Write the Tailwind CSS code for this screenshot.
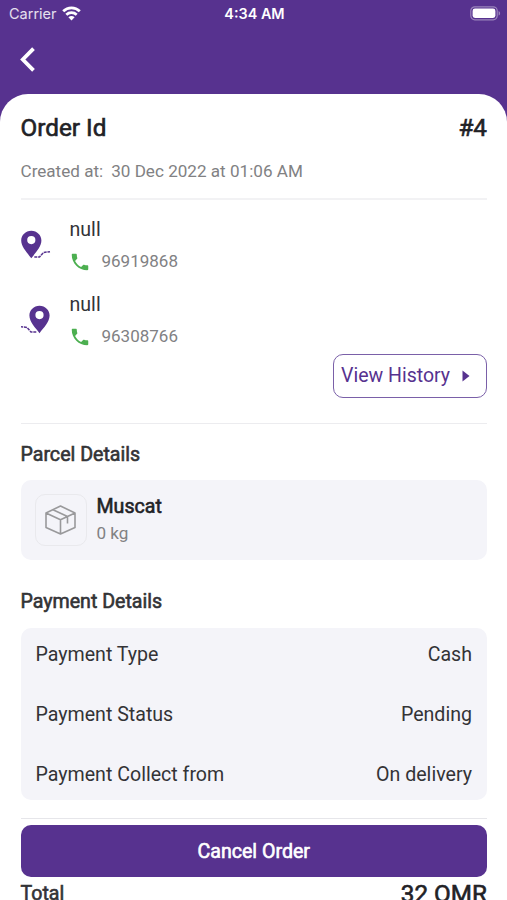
<!DOCTYPE html>
<html lang="en">
<head>
<meta charset="utf-8">
<title>Order details</title>
<script src="https://cdn.jsdelivr.net/npm/@tailwindcss/browser@4"></script>
</head>
<body class="bg-[#57328f]">
<div class="h-[900px] w-[507px] overflow-hidden bg-[#57328f] font-['Roboto',sans-serif] text-[#333336] whitespace-nowrap">
  <header class="h-[94px] text-white">
    <div class="grid h-[28px] grid-cols-3 items-center pl-[9px] pr-[6px] font-['Inter',sans-serif]">
      <div class="flex items-center gap-[6px] text-[14.5px] text-white/85"><span>Carrier</span>
        <svg class="-mt-[2px] -ml-px h-[15px] w-[19px]" viewBox="0 0 19 15" fill="none" stroke="#fff" stroke-width="2.7"><path d="M1.2 5.3C5.8.6 13.2.6 17.8 5.3M4.3 8.7c2.900-2.800 7.500-2.800 10.400 0"/><path d="M9.500 14.400 6.400 11.300c1.700-1.600 4.500-1.600 6.200 0z" fill="#fff" stroke="none"/></svg>
      </div>
      <div class="-ml-px text-center text-[14.4px] font-semibold">4:34 AM</div>
      <svg class="-mt-[2px] h-[15px] w-[31px] justify-self-end" viewBox="0 0 31 15" fill="none"><rect x=".8" y=".8" width="26.4" height="13" rx="4" stroke="#fff" stroke-opacity=".4" stroke-width="1.2"/><rect x="2.6" y="2.6" width="22.8" height="9.4" rx="2.4" fill="#fff"/><path d="M28.6 5v4.6c2-.8 2-3.8 0-4.6z" fill="#fff" fill-opacity=".4"/></svg>
    </div>
    <svg class="ml-[20px] mt-[19px] h-[25px] w-[16px]" viewBox="0 0 16 25" fill="none" stroke="#fff" stroke-width="3.8"><path d="M13.5 1.600 2.800 12.500l10.700 10.900"/></svg>
  </header>

  <main class="h-[806px] rounded-t-[28px] bg-white pl-[20.5px] pr-[20px]">
    <div class="flex h-[64px] items-start justify-between pt-[19px] text-[24.3px] leading-[30px] text-[#222226] [-webkit-text-stroke:0.6px_currentColor]"><h1>Order Id</h1><span>#4</span></div>
    <div class="flex h-[41.5px] items-start gap-[8px] border-b-2 border-[#f2f2f4] pt-px text-[17.1px] leading-[24px] text-[#818183]"><span>Created at:</span><span>30 Dec 2022 at 01:06 AM</span></div>

    <section class="h-[223.5px] pt-[14.5px]">
      <div class="flex h-[74.5px]">
        <svg class="mt-[16px] h-[30px] w-[30px]" viewBox="0 0 30 30"><path fill="#57328f" fill-rule="evenodd" d="M10.300.8C4.600.8.2 5.200.2 10.600c0 6.200 6 12.400 10.100 17.600 4.100-5.200 10.100-11.400 10.100-17.600C20.400 5.200 16 .8 10.300.8zm0 5.200a4.100 4.100 0 1 1 0 8.200 4.100 4.100 0 0 1 0-8.200z"/><path d="M13.300 27h5.200l4-4.500 6.500-.8" fill="none" stroke="#57328f" stroke-width="1.5" stroke-dasharray="3 .8"/></svg>
        <div class="ml-[19px]">
          <div class="pt-px text-[19.6px] leading-[30px]">null</div>
          <div class="flex h-[34px] items-center gap-[10.5px] text-[17px] text-[#818183]"><svg class="-ml-[0.5px] h-[22px] w-[22px]" viewBox="0 0 24 24" fill="#4caf50"><path d="M6.62 10.79c1.44 2.83 3.76 5.14 6.59 6.59l2.2-2.2c.27-.27.67-.36 1.02-.24 1.12.37 2.33.57 3.57.57.55 0 1 .45 1 1V20c0 .55-.45 1-1 1C10.61 21 3 13.39 3 4c0-.55.45-1 1-1h3.5c.55 0 1 .45 1 1 0 1.25.2 2.45.57 3.57.11.35.03.74-.25 1.02z"/></svg><span>96919868</span></div>
        </div>
      </div>
      <div class="flex h-[65px]">
        <svg class="mt-[16px] h-[30px] w-[30px]" viewBox="0 0 30 30"><path fill="#57328f" fill-rule="evenodd" d="M18.500.8C12.800.8 8.400 5.200 8.400 10.600c0 6.200 6 12.400 10.100 17.600 4.100-5.200 10.100-11.400 10.100-17.600C28.600 5.200 24.200.8 18.500.8zm0 5.200a4.100 4.100 0 1 1 0 8.200 4.100 4.100 0 0 1 0-8.200z"/><path d="M15.300 27h-5.300l-4-4.500-6-.8" fill="none" stroke="#57328f" stroke-width="1.5" stroke-dasharray="3 .8"/></svg>
        <div class="ml-[19px]">
          <div class="pt-px text-[19.6px] leading-[30px]">null</div>
          <div class="flex h-[34px] items-center gap-[10.5px] text-[17px] text-[#818183]"><svg class="-ml-[0.5px] h-[22px] w-[22px]" viewBox="0 0 24 24" fill="#4caf50"><path d="M6.62 10.79c1.44 2.83 3.76 5.14 6.59 6.59l2.2-2.2c.27-.27.67-.36 1.02-.24 1.12.37 2.33.57 3.57.57.55 0 1 .45 1 1V20c0 .55-.45 1-1 1C10.61 21 3 13.39 3 4c0-.55.45-1 1-1h3.5c.55 0 1 .45 1 1 0 1.25.2 2.45.57 3.57.11.35.03.74-.25 1.02z"/></svg><span>96308766</span></div>
        </div>
      </div>
      <button class="ml-auto flex h-[44px] w-[154px] items-center gap-[12px] rounded-[10px] border-[1.4px] border-[#7a60a8] pl-[7px] text-[19.5px] text-[#57328f]"><span class="pt-px">View History</span><svg class="h-[12px] w-[8px]" viewBox="0 0 8 12"><path d="M.5.5 7.500 6 .5 11.500z" fill="#57328f"/></svg></button>
    </section>

    <section class="border-t border-[#ececef]">
      <h2 class="h-[56px] pt-[16px] text-[19.6px] leading-[30px] [-webkit-text-stroke:0.6px_currentColor]">Parcel Details</h2>
      <div class="flex h-[80px] items-center gap-[10px] rounded-[10px] bg-[#f4f4f9] pl-[14px]">
        <div class="flex h-[52px] w-[52px] items-center justify-center rounded-[10px] border border-[#e9e9ed]">
          <svg class="h-[30px] w-[31px]" viewBox="0 0 31 30" fill="none" stroke="#99999b" stroke-width="1.6" stroke-linejoin="round"><path d="M15.500 1 30 8v14.500L15.500 29 1 22.500V8zM1 8l14.500 6.800L30 8M15.500 14.800V29M8 4.700l14.500 6.800v7"/></svg>
        </div>
        <div class="-mt-px"><div class="text-[19.600px] leading-[26px] text-[#222226] [-webkit-text-stroke:0.6px_currentColor]">Muscat</div><div class="text-[17.1px] leading-[26px] text-[#818183]">0 kg</div></div>
      </div>
    </section>

    <section>
      <h2 class="h-[68px] pt-[27px] text-[19.6px] leading-[30px] [-webkit-text-stroke:0.6px_currentColor]">Payment Details</h2>
      <dl class="flex h-[172px] flex-col justify-between rounded-[10px] bg-[#f4f4f9] px-[15px] pt-[12px] pb-[10px] text-[19.6px] leading-[30px]">
        <div class="flex justify-between"><dt>Payment Type</dt><dd>Cash</dd></div>
        <div class="flex justify-between"><dt>Payment Status</dt><dd>Pending</dd></div>
        <div class="flex justify-between"><dt>Payment Collect from</dt><dd>On delivery</dd></div>
      </dl>
    </section>

    <div class="mt-[18px] h-[7px] border-t border-[#e6e6ea]"></div>
    <button class="block h-[52px] w-full rounded-[10px] bg-[#57328f] pt-[2px] text-[19.6px] text-white [-webkit-text-stroke:0.6px_currentColor]">Cancel Order</button>
    <div class="flex h-[34px] items-center justify-between [-webkit-text-stroke:0.6px_currentColor]"><span class="text-[19.6px]">Total</span><span class="text-[24.3px] text-[#222226]">32 OMR</span></div>
  </main>
</div>
</body>
</html>
